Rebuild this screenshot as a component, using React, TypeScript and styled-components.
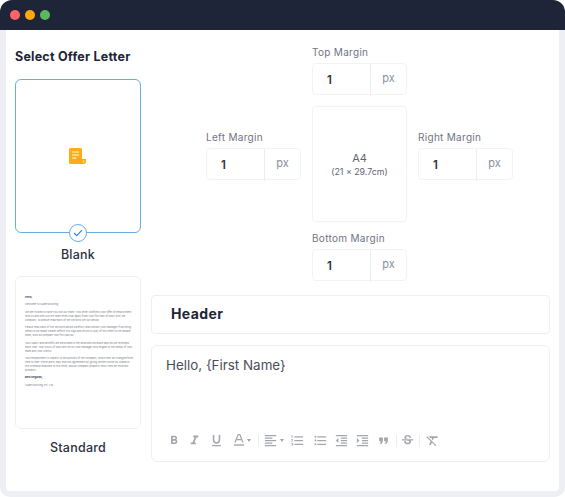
import React from 'react';
import styled, { createGlobalStyle } from 'styled-components';
import {
  MdFormatBold,
  MdFormatItalic,
  MdFormatUnderlined,
  MdFormatAlignLeft,
  MdFormatListNumbered,
  MdFormatListBulleted,
  MdFormatIndentDecrease,
  MdFormatIndentIncrease,
  MdFormatQuote,
  MdStrikethroughS,
  MdFormatClear,
} from 'react-icons/md';

const GlobalStyle = createGlobalStyle`
  html, body {
    margin: 0;
    padding: 0;
    background: #fff;
  }
  * {
    box-sizing: border-box;
  }
`;

const Page = styled.div`
  width: 565px;
  height: 497px;
  font-family: Inter, 'Liberation Sans', sans-serif;
  color: #1e2538;
  display: flex;
  flex-direction: column;
`;

const TitleBar = styled.div`
  height: 30px;
  background-color: #1e2538;
  border-radius: 12px 12px 0 0;
  display: flex;
  align-items: center;
  gap: 5px;
  padding-left: 10px;
`;

const Dot = styled.span<{ $color: string }>`
  width: 10px;
  height: 10px;
  border-radius: 50%;
  background-color: ${(p) => p.$color};
`;

const Body = styled.div`
  flex: 1;
  display: grid;
  grid-template-columns: 126px 399px;
  column-gap: 10px;
  padding: 0 3px 0 9px;
  border: 6px solid #edeff4;
  border-top: 0;
  border-radius: 0 0 10px 10px;
`;

const Sidebar = styled.div`
  padding-top: 18px;
`;

const SideTitle = styled.h2`
  margin: 0 0 13px;
  font-size: 12.5px;
  line-height: 18px;
  font-weight: 700;
  letter-spacing: 0.22px;
`;

const LetterCard = styled.div<{ $selected?: boolean }>`
  position: relative;
  height: ${(p) => (p.$selected ? 154 : 153)}px;
  border: ${(p) => (p.$selected ? '1.5px solid #68ade3' : '1px solid #eef0f4')};
  border-radius: 6px;
  display: flex;
  align-items: center;
  justify-content: center;
`;

const LetterLabel = styled.div<{ $gap: number }>`
  margin: ${(p) => p.$gap}px 0 13px;
  text-align: center;
  font-size: 12.5px;
  line-height: 16px;
  font-weight: 500;
  letter-spacing: 0.25px;
  color: #2b3040;
`;

const CheckBadge = styled.span`
  position: absolute;
  left: 50%;
  bottom: -10px;
  width: 18px;
  height: 18px;
  margin-left: -9px;
  border: 1px solid #68ade3;
  border-radius: 50%;
  background: #fff;
  display: flex;
  align-items: center;
  justify-content: center;
`;

const Letter = styled.div`
  width: 100%;
  height: 100%;
  padding: 19px 7px 0 9px;
  font-size: 2.6px;
  line-height: 3.9px;
  color: #777b85;
`;

const LetterPara = styled.p`
  margin: 0 0 3.7px;
`;

const LetterStrong = styled.p`
  margin: 0 0 3.4px;
  font-weight: 700;
  color: #333745;
`;

const Main = styled.div`
  padding-top: 16px;
  display: flex;
  flex-direction: column;
`;

const MarginGrid = styled.div`
  display: grid;
  grid-template-columns: repeat(3, 95px);
  column-gap: 11px;
  margin-left: 55px;
  margin-bottom: 14px;
`;

const SideField = styled.div`
  margin-top: 85px;
`;

const CenterColumn = styled.div`
  display: flex;
  flex-direction: column;
`;

const Label = styled.label`
  display: block;
  height: 12px;
  margin-bottom: 5px;
  font-size: 10px;
  line-height: 12px;
  letter-spacing: 0.3px;
  color: #6f7482;
`;

const Field = styled.div`
  height: 32px;
  display: grid;
  grid-template-columns: 58px 1fr;
  border: 1px solid #f2f3f6;
  border-radius: 4px;
`;

const FieldValue = styled.div`
  padding-left: 14px;
  font-size: 11.5px;
  font-weight: 600;
  line-height: 32px;
  color: #2b3040;
  border-right: 1px solid #eceef2;
`;

const FieldUnit = styled.div`
  text-align: center;
  font-size: 11px;
  line-height: 28px;
  color: #8a8f9c;
`;

const Paper = styled.div`
  height: 116px;
  margin: 11px 0 10px;
  border: 1px solid #f2f3f6;
  border-radius: 4px;
  display: flex;
  flex-direction: column;
  align-items: center;
  justify-content: center;
  font-size: 8.8px;
  line-height: 13px;
  color: #5f6471;
`;

const PaperName = styled.div`
  font-size: 11px;
  line-height: 14px;
`;

const HeaderBox = styled.div`
  height: 39px;
  margin-bottom: 11px;
  padding-left: 19px;
  border: 1px solid #edeff3;
  border-radius: 4px;
  font-size: 14px;
  font-weight: 700;
  letter-spacing: 0.4px;
  line-height: 36px;
`;

const Editor = styled.div`
  height: 117px;
  padding: 9px 14px 0;
  border: 1px solid #edeff3;
  border-radius: 6px;
  display: flex;
  flex-direction: column;
`;

const EditorText = styled.div`
  font-size: 13.4px;
  line-height: 20px;
  color: #4a4e5a;
`;

const Toolbar = styled.div`
  margin-top: 58px;
  margin-left: 1px;
  display: flex;
  align-items: center;
  height: 14px;
  color: #a3a6ac;
`;

const Tool = styled.span<{ $width: number }>`
  width: ${(p) => p.$width}px;
  display: flex;
  align-items: center;
  justify-content: center;
  font-size: 15px;
`;

const Caret = styled.span`
  width: 0;
  height: 0;
  margin-left: 2px;
  border-left: 2.5px solid transparent;
  border-right: 2.5px solid transparent;
  border-top: 3px solid #a3a6ac;
`;

const Separator = styled.span<{ $before?: number }>`
  width: 1px;
  height: 13px;
  margin-left: ${(p) => p.$before ?? 0}px;
  background-color: #eceef0;
`;

const DocIcon = () => (
  <svg width="18" height="17" viewBox="0 0 18 17">
    <path d="M1.5 0h10A1.5 1.5 0 0 1 13 1.5V11h4v2.5a2.5 2.5 0 0 1-2.5 2.5h-13A1.5 1.5 0 0 1 0 14.5v-13A1.5 1.5 0 0 1 1.5 0z" fill="#ffab19" />
    <path d="M3 4h7M3 7h7M3 10h4.5" stroke="#ffe39a" strokeWidth="1.3" fill="none" />
    <circle cx="14.5" cy="13.5" r="1" fill="#ffe39a" />
  </svg>
);

const TextColorIcon = () => (
  <svg width="12" height="14" viewBox="0 0 12 14">
    <path d="M2 9.5 5.2 1.5h1.6L10 9.5M3.4 6.6h5.2" stroke="#a3a6ac" strokeWidth="1.2" fill="none" />
    <path d="M1 12h10" stroke="#a3a6ac" strokeWidth="1.4" />
  </svg>
);

const App: React.FC = () => {
  return (
    <Page>
      <GlobalStyle />
      <TitleBar>
        <Dot $color="#ff6369" />
        <Dot $color="#ffa90f" />
        <Dot $color="#5cb85c" />
      </TitleBar>
      <Body>
        <Sidebar>
          <SideTitle>Select Offer Letter</SideTitle>
          <LetterCard $selected>
            <DocIcon />
            <CheckBadge>
              <svg width="10" height="8" viewBox="0 0 10 8">
                <path d="M1 4l2.7 2.6L9 1.2" stroke="#3b82e6" strokeWidth="1.2" fill="none" />
              </svg>
            </CheckBadge>
          </LetterCard>
          <LetterLabel $gap={14}>Blank</LetterLabel>
          <LetterCard>
            <Letter>
              <LetterStrong>Hello,</LetterStrong>
              <LetterPara>Welcome to Supersourcing</LetterPara>
              <LetterPara>
                We are thrilled to have you join our team. This letter confirms your offer of employment with us and sets out the main terms that apply from your first day of work with the company, so please read each of the sections set out below.
              </LetterPara>
              <LetterPara>
                Please read each of the sections below carefully and contact your manager if anything needs to be made clearer before you sign and return a copy of this letter to the people team, who will prepare your first payroll.
              </LetterPara>
              <LetterPara>
                Your salary and benefits are described in the attached schedule and will be reviewed each year. Your hours of work are set by your manager with regard to the needs of your team and your clients.
              </LetterPara>
              <LetterPara>
                Your employment is subject to the policies of the company, which may be changed from time to time. Either party may end this agreement by giving written notice as stated in the schedule attached to this letter, and all company property must then be returned promptly.
              </LetterPara>
              <LetterStrong>Best Regards,</LetterStrong>
              <LetterPara>Supersourcing Pvt. Ltd.</LetterPara>
            </Letter>
          </LetterCard>
          <LetterLabel $gap={11}>Standard</LetterLabel>
        </Sidebar>
        <Main>
          <MarginGrid>
            <SideField>
              <Label>Left Margin</Label>
              <Field>
                <FieldValue>1</FieldValue>
                <FieldUnit>px</FieldUnit>
              </Field>
            </SideField>
            <CenterColumn>
              <Label>Top Margin</Label>
              <Field>
                <FieldValue>1</FieldValue>
                <FieldUnit>px</FieldUnit>
              </Field>
              <Paper>
                <PaperName>A4</PaperName>
                <div>(21 x 29.7cm)</div>
              </Paper>
              <Label>Bottom Margin</Label>
              <Field>
                <FieldValue>1</FieldValue>
                <FieldUnit>px</FieldUnit>
              </Field>
            </CenterColumn>
            <SideField>
              <Label>Right Margin</Label>
              <Field>
                <FieldValue>1</FieldValue>
                <FieldUnit>px</FieldUnit>
              </Field>
            </SideField>
          </MarginGrid>
          <HeaderBox>Header</HeaderBox>
          <Editor>
            <EditorText>Hello, {'{First Name}'}</EditorText>
            <Toolbar>
              <Tool $width={14}><MdFormatBold /></Tool>
              <Tool $width={26}><MdFormatItalic /></Tool>
              <Tool $width={18}><MdFormatUnderlined /></Tool>
              <Tool $width={33}><TextColorIcon /><Caret /></Tool>
              <Separator />
              <Tool $width={28}><MdFormatAlignLeft /><Caret /></Tool>
              <Tool $width={20}><MdFormatListNumbered /></Tool>
              <Tool $width={26}><MdFormatListBulleted /></Tool>
              <Tool $width={16}><MdFormatIndentDecrease /></Tool>
              <Tool $width={26}><MdFormatIndentIncrease /></Tool>
              <Tool $width={16}><MdFormatQuote /></Tool>
              <Separator $before={5} />
              <Tool $width={21}><MdStrikethroughS /></Tool>
              <Separator $before={1} />
              <Tool $width={25}><MdFormatClear /></Tool>
            </Toolbar>
          </Editor>
        </Main>
      </Body>
    </Page>
  );
};

export default App;
